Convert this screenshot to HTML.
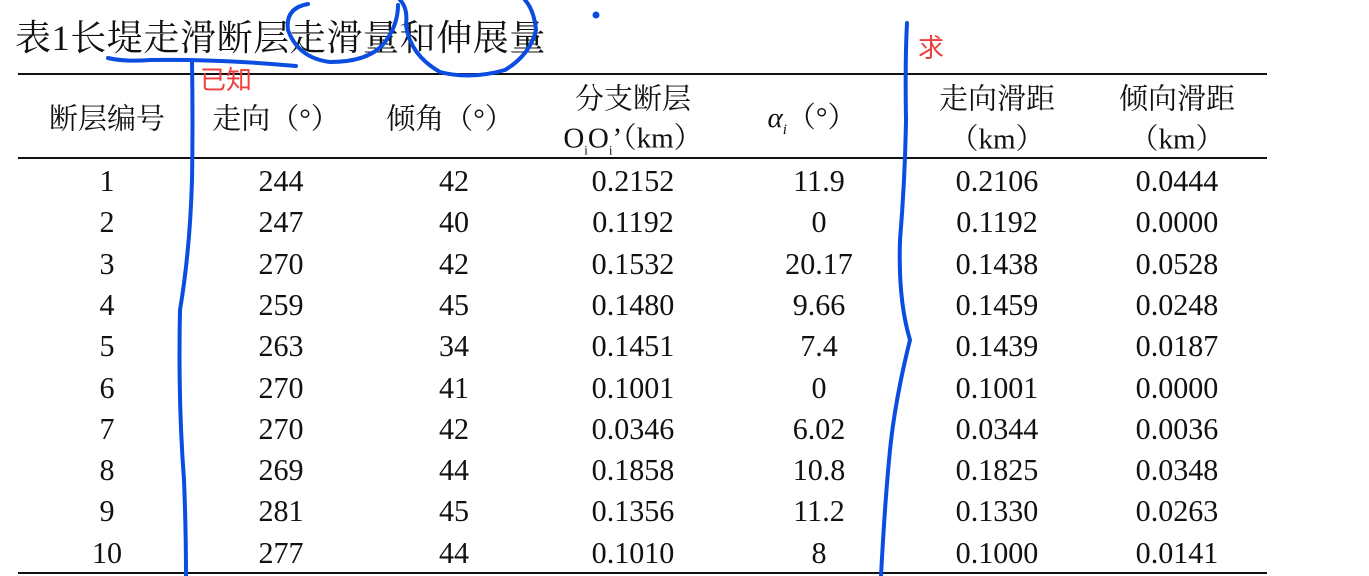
<!DOCTYPE html>
<html><head><meta charset="utf-8"><style>
body{margin:0;width:1369px;height:576px;background:#fff;overflow:hidden;position:relative;font-family:"Liberation Serif","Noto Serif CJK SC",serif;color:#111}
.t{position:absolute;white-space:nowrap;transform:translate(-50%,-50%)}
.d{font-size:31px;transform:translate(-50%,-50%) scaleX(0.97)}
.h{font-size:29px}
.line{position:absolute;left:18px;width:1249px;background:#111}
</style></head><body>
<div style="position:absolute;left:15px;top:10px;font-size:36px;white-space:nowrap;letter-spacing:0.6px">表1长堤走滑断层走滑量和伸展量</div>
<div class="line" style="top:73px;height:2px"></div>
<div class="line" style="top:157px;height:2px"></div>
<div class="line" style="top:572px;height:2px"></div>
<div class="t h" style="left:107px;top:117px">断层编号</div>
<div class="t h" style="left:276px;top:117px">走向（°）</div>
<div class="t h" style="left:450px;top:117px">倾角（°）</div>
<div class="t h" style="left:633px;top:97px">分支断层</div>
<div class="t h" style="left:633px;top:137px">O<sub style="font-size:13px">i</sub>O<sub style="font-size:13px">i</sub>’（km）</div>
<div class="t h" style="left:812px;top:117px"><i>α<sub style="font-size:15px">i</sub></i>（°）</div>
<div class="t h" style="left:997px;top:97px">走向滑距</div>
<div class="t h" style="left:997px;top:137px">（km）</div>
<div class="t h" style="left:1177px;top:97px">倾向滑距</div>
<div class="t h" style="left:1177px;top:137px">（km）</div>
<div id="rows"></div>
<script>
var r=[["1","244","42","0.2152","11.9","0.2106","0.0444"],["2","247","40","0.1192","0","0.1192","0.0000"],["3","270","42","0.1532","20.17","0.1438","0.0528"],["4","259","45","0.1480","9.66","0.1459","0.0248"],["5","263","34","0.1451","7.4","0.1439","0.0187"],["6","270","41","0.1001","0","0.1001","0.0000"],["7","270","42","0.0346","6.02","0.0344","0.0036"],["8","269","44","0.1858","10.8","0.1825","0.0348"],["9","281","45","0.1356","11.2","0.1330","0.0263"],["10","277","44","0.1010","8","0.1000","0.0141"]];
var xs=[107,281,454,633,819,997,1177],h="";
r.forEach(function(row,i){var y=181+i*41.3;row.forEach(function(v,j){h+='<div class="t d" style="left:'+xs[j]+'px;top:'+y+'px">'+v+'</div>';});});
document.getElementById('rows').innerHTML=h;
</script>
<div style="position:absolute;left:200px;top:60px;color:#f03c3c;font-size:26px;font-family:'Noto Sans CJK SC',sans-serif">已知</div>
<div style="position:absolute;left:918px;top:28px;color:#f03c3c;font-size:26px;font-family:'Noto Sans CJK SC',sans-serif">求</div>
<svg style="position:absolute;left:0;top:0" width="1369" height="576" fill="none" stroke="#0a4de0" stroke-width="4" stroke-linecap="round" stroke-linejoin="round">
<path d="M108 58 Q125 62 150 60 Q220 59 296 66"/>
<path d="M192 62 Q193 120 192 180 Q190 250 180 310 Q178 400 184 480 Q186 530 186 576"/>
<path d="M308 4 Q285 8 288 30 Q298 58 330 62 Q370 62 385 42 Q398 25 398 5"/>
<path d="M400 0 Q408 8 406 25 Q410 55 440 72 Q470 80 505 70 Q530 55 536 30 Q534 10 525 0"/>
<path d="M907 23 Q905 60 906 120 Q905 180 900 240 Q898 300 910 340 Q895 400 890 450 Q885 500 881 576"/>
<circle cx="596" cy="15" r="1.5" fill="#0a4de0"/>
</svg>
</body></html>
